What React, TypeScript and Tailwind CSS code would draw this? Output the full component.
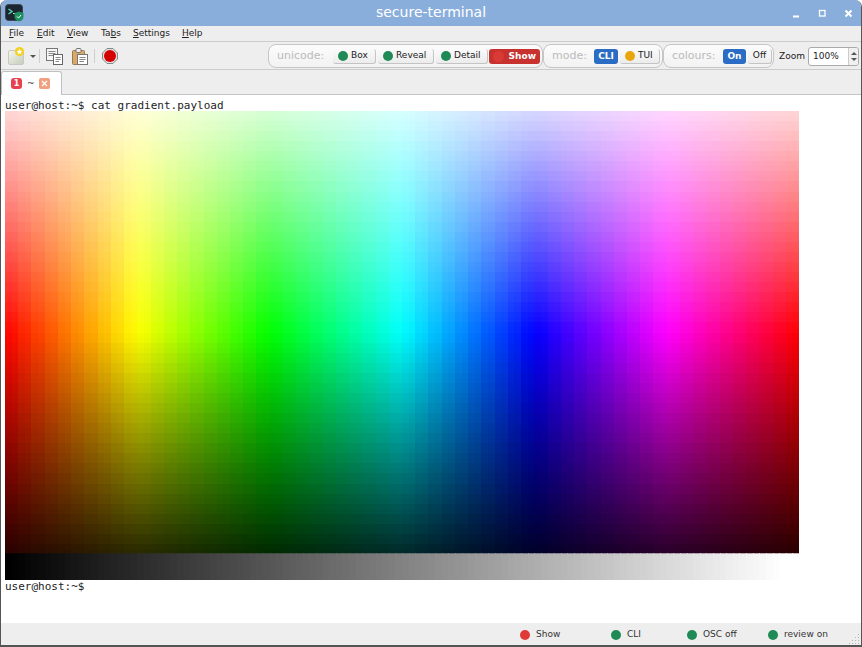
const ui = { fontFamily: '"DejaVu Sans", sans-serif' };
const COLS = 120;
const ROWS = 88;
const CELL_W = 794 / COLS;
const CELL_H = 443 / ROWS;

// faint blocks show through in the picture, so pull each fine cell a bit toward its coarse block
function soften(i: number, total: number) {
    const fine = (i + 0.5) / total;
    const coarse = (Math.floor(i / 2) * 2 + 1) / total;
    return fine + 0.5 * (coarse - fine);
}

function cellColor(col: number, row: number) {
    const hue = soften(col, COLS) * 360;
    const light = 92 - 84 * soften(row, ROWS);
    return `hsl(${hue} 100% ${light}%)`;
}

function grey(col: number) {
    const v = Math.round((col / (COLS - 3)) * 255);
    return `rgb(${v},${v},${v})`;
}

function GradientPayload() {
    const cols = Array.from({ length: COLS }, (_, i) => i);
    const rows = Array.from({ length: ROWS }, (_, i) => i);
    return (
        <svg width="794" height="469" viewBox="0 0 794 469" shapeRendering="crispEdges" className="block shrink-0">
            {rows.map((r) =>
                cols.map((c) => (
                    <rect key={`${r}-${c}`} x={c * CELL_W} y={r * CELL_H} width={CELL_W + 1} height={CELL_H + 1} fill={cellColor(c, r)} />
                ))
            )}
            {cols.map((c) => (
                <rect key={`seam-${c}`} x={c * CELL_W} y={442} width={CELL_W + 1} height={1} fill={grey(c)} opacity={0.7} />
            ))}
            {cols.map((c) => (
                <rect key={c} x={c * CELL_W} y={443} width={CELL_W + 1} height={26} fill={grey(c)} />
            ))}
        </svg>
    );
}

function AppIcon() {
    return (
        <svg width="19" height="18" viewBox="0 0 19 18" className="shrink-0">
            <rect x="0.5" y="0.5" width="17" height="16" rx="3" fill="#1c2630" stroke="#3b4650" />
            <path d="M3.5 5 L7 7.5 L3.5 10" fill="none" stroke="#4fd8b0" strokeWidth="1.4" />
            <path d="M8 9.5 H11" stroke="#d8e6e6" strokeWidth="1.2" />
            <path d="M14 7.5 L18.5 9 V12.5 Q18.5 16 14 17.5 Q9.5 16 9.5 12.5 V9 Z" fill="#1f9060" />
            <path d="M12 12.5 L13.5 14 L16 11" fill="none" stroke="#fff" strokeWidth="1" />
        </svg>
    );
}

function NewTabIcon() {
    return (
        <svg width="18" height="18" viewBox="0 0 18 18" className="shrink-0">
            <defs>
                <linearGradient id="pg" x1="0" y1="0" x2="1" y2="1">
                    <stop offset="0" stopColor="#f6f6f0" />
                    <stop offset="1" stopColor="#c4ccb8" />
                </linearGradient>
            </defs>
            <rect x="0.5" y="3.5" width="15" height="14" rx="1.5" fill="url(#pg)" stroke="#c8c8c0" />
            <circle cx="11.5" cy="4.5" r="4.5" fill="#f2d21e" />
            <path d="M11.5 1.8 L12.4 3.8 L14.4 4 L13 5.3 L13.4 7.2 L11.5 6.2 L9.6 7.2 L10 5.3 L8.6 4 L10.6 3.8 Z" fill="#fff" />
        </svg>
    );
}

function CopyIcon() {
    return (
        <svg width="17" height="17" viewBox="0 0 17 17" className="shrink-0">
            <rect x="0.5" y="0.5" width="11" height="12" fill="#f6f6f6" stroke="#777" />
            <path d="M2.5 3.5 H9.5 M2.5 5.5 H9.5 M2.5 7.5 H7" stroke="#888" />
            <rect x="7.5" y="6.5" width="9" height="10" fill="#fff" stroke="#666" />
            <path d="M9.5 9.5 H14.5 M9.5 11.5 H14.5 M9.5 13.5 H13" stroke="#888" />
        </svg>
    );
}

function PasteIcon() {
    return (
        <svg width="16" height="17" viewBox="0 0 16 17" className="shrink-0">
            <rect x="0.5" y="2.5" width="12" height="14" rx="1" fill="#d9a968" stroke="#9a7a50" />
            <rect x="4" y="0.5" width="5" height="4" rx="1" fill="#eee" stroke="#777" />
            <rect x="5.5" y="6.5" width="10" height="10" fill="#fff" stroke="#777" />
            <path d="M7.5 9.5 H13.5 M7.5 11.5 H13.5 M7.5 13.5 H12" stroke="#888" />
        </svg>
    );
}

function RecordIcon() {
    return (
        <svg width="16" height="16" viewBox="0 0 16 16" className="shrink-0">
            <path d="M5 0.5 H11 L15.5 5 V11 L11 15.5 H5 L0.5 11 V5 Z" fill="#ddd" stroke="#888" />
            <circle cx="8" cy="8" r="6" fill="#d40000" />
        </svg>
    );
}

function Dot({ color }: { color: string }) {
    return <span className="w-[10px] h-[10px] rounded-full shrink-0" style={{ backgroundColor: color }} />;
}

function SoftButton({ label, width, dot }: { label: string; width: string; dot?: string }) {
    return (
        <div className={`${width} h-[15px] rounded-[3px] border-b border-r border-[#c4c4c4] bg-gradient-to-b from-[#fafafa] to-[#ececec] flex items-center gap-[3px] text-[9px] text-[#222] ${dot ? "pl-[5px]" : "justify-center"}`}>
            {dot && <Dot color={dot} />}
            <span>{label}</span>
        </div>
    );
}

function BlueButton({ label, width }: { label: string; width: string }) {
    return (
        <div className={`${width} h-[15px] rounded-[3px] bg-[#2b6cc4] flex items-center justify-center text-[9px] font-bold text-white`}>
            {label}
        </div>
    );
}

function Group({ label, width, labelWidth, children }: { label: string; width: string; labelWidth: string; children: React.ReactNode }) {
    return (
        <div className={`${width} h-[24px] rounded-[8px] border border-[#c6c6c6] bg-gradient-to-b from-[#fcfcfc] to-[#f2f2f2] flex items-center pt-[1px] pl-[8px]`}>
            <span className={`${labelWidth} text-[11px] text-[#bbbbbb]`}>{label}</span>
            <div className="flex items-center gap-[2px]">{children}</div>
        </div>
    );
}

function MenuLabel({ before, mark, after, width }: { before?: string; mark: string; after: string; width: string }) {
    return (
        <span className={`${width} block`}>
            {before}
            <span className="underline underline-offset-1">{mark}</span>
            {after}
        </span>
    );
}

function StatusItem({ color, label, width }: { color: string; label: string; width: string }) {
    return (
        <div className={`${width} flex items-center gap-[6px]`}>
            <Dot color={color} />
            <span>{label}</span>
        </div>
    );
}

export default function App() {
    return (
        <div style={ui} className="w-[862px] h-[647px] bg-[#eeeeee] border-x border-b-2 border-[#555555] rounded-t-[7px] overflow-hidden flex flex-col relative">
            <div className="h-[26px] shrink-0 bg-[#8aaedb] relative flex items-center justify-center pb-[2px]">
                <div className="absolute left-[4px] top-[4px]">
                    <AppIcon />
                </div>
                <span className="text-[14px] text-white">secure-terminal</span>
                <div className="absolute right-[8px] top-[9px] flex items-center gap-[17px]">
                    <svg width="9" height="9" viewBox="0 0 9 9"><path d="M1 7.5 H7" stroke="#fff" strokeWidth="2" /></svg>
                    <svg width="9" height="9" viewBox="0 0 9 9"><rect x="1.5" y="1.5" width="5.5" height="5.5" fill="none" stroke="#fff" strokeWidth="1.3" /></svg>
                    <svg width="9" height="9" viewBox="0 0 9 9"><path d="M1.5 1.5 L7.5 7.5 M7.5 1.5 L1.5 7.5" stroke="#fff" strokeWidth="2" /></svg>
                </div>
            </div>

            <div className="h-[15px] shrink-0 flex items-center pl-[8px] text-[9px] text-[#222]">
                <MenuLabel mark="F" after="ile" width="w-[28px]" />
                <MenuLabel mark="E" after="dit" width="w-[30px]" />
                <MenuLabel mark="V" after="iew" width="w-[34px]" />
                <MenuLabel before="Ta" mark="b" after="s" width="w-[32px]" />
                <MenuLabel mark="S" after="ettings" width="w-[49px]" />
                <MenuLabel mark="H" after="elp" width="w-[30px]" />
            </div>

            <div className="h-[29px] shrink-0 border-y border-[#cccccc] flex items-center pt-[1px] pl-[7px] pr-[2px]">
                <NewTabIcon />
                <span className="ml-[4px] w-0 h-0 border-x-[3px] border-x-transparent border-t-[3px] border-t-[#555]" />
                <span className="ml-[3px] w-px h-[14px] bg-[#cfcfcf]" />
                <div className="ml-[6px]"><CopyIcon /></div>
                <div className="ml-[9px]"><PasteIcon /></div>
                <span className="ml-[6px] w-px h-[14px] bg-[#cfcfcf]" />
                <div className="ml-[7px]"><RecordIcon /></div>

                <div className="ml-auto flex items-center">
                    <Group label="unicode:" width="w-[275px]" labelWidth="w-[56px]">
                        <SoftButton label="Box" width="w-[43px]" dot="#1f8a55" />
                        <SoftButton label="Reveal" width="w-[56px]" dot="#1f8a55" />
                        <SoftButton label="Detail" width="w-[52px]" dot="#1f8a55" />
                        <div className="w-[51px] h-[15px] -ml-[1px] rounded-[3px] bg-[#c8322e] relative flex items-center justify-end pr-[4px] text-[9px] font-bold text-white">
                            <span className="absolute left-[4px] top-[2px] w-[11px] h-[11px] rounded-full bg-[#d93a35]" />
                            Show
                        </div>
                    </Group>
                    <Group label="mode:" width="w-[120px]" labelWidth="w-[42px]">
                        <BlueButton label="CLI" width="w-[24px]" />
                        <SoftButton label="TUI" width="w-[40px]" dot="#e8a60c" />
                    </Group>
                    <Group label="colours:" width="w-[111px]" labelWidth="w-[51px]">
                        <BlueButton label="On" width="w-[23px]" />
                        <SoftButton label="Off" width="w-[24px]" />
                    </Group>
                    <span className="ml-[5px] mt-[1px] w-[29px] text-[9px] text-[#222]">Zoom</span>
                    <div className="w-[51px] h-[19px] mt-[1px] rounded-[3px] border border-[#aaaaaa] bg-white flex items-center text-[9px] text-[#222]">
                        <span className="flex-1 pl-[4px]">100%</span>
                        <div className="w-[10px] h-full border-l border-[#cccccc] bg-[#f0f0f0] rounded-r-[3px] flex flex-col items-center justify-center gap-[3px]">
                            <span className="w-0 h-0 border-x-[3px] border-x-transparent border-b-[3px] border-b-[#555]" />
                            <span className="w-0 h-0 border-x-[3px] border-x-transparent border-t-[3px] border-t-[#555]" />
                        </div>
                    </div>
                </div>
            </div>

            <div className="h-[25px] shrink-0 border-b border-[#c4c4c4] flex items-end">
                <div className="w-[61px] h-[24px] -mb-px rounded-t-[3px] border border-b-0 border-[#c0c0c0] bg-white flex items-center pl-[9px] text-[9px] text-[#333] relative">
                    <span className="w-[11px] h-[11px] rounded-[3px] bg-[#e8404f] text-white text-[8px] font-bold flex items-center justify-center">1</span>
                    <span className="ml-[5px] w-[7px]">~</span>
                    <span className="ml-[5px] w-[11px] h-[11px] rounded-[2px] bg-[#f0a07c] text-white flex items-center justify-center">
                        <svg width="7" height="7" viewBox="0 0 7 7"><path d="M1 1 L6 6 M6 1 L1 6" stroke="#fff" strokeWidth="1.3" /></svg>
                    </span>
                </div>
            </div>

            <div style={{ fontFamily: '"DejaVu Sans Mono", monospace' }} className="flex-1 bg-white pl-[4px] pt-[3px] text-[11px] leading-[13px] text-[#222] flex flex-col">
                <div className="h-[13px] pt-[1px]">user@host:~$ cat gradient.payload</div>
                <GradientPayload />
                <div className="h-[13px]">user@host:~$</div>
            </div>

            <div className="h-[22px] shrink-0 flex items-center pt-[2px] pl-[519px] text-[9px] text-[#333] relative">
                <StatusItem color="#e03a36" label="Show" width="w-[91px]" />
                <StatusItem color="#1f8a55" label="CLI" width="w-[76px]" />
                <StatusItem color="#1f8a55" label="OSC off" width="w-[81px]" />
                <StatusItem color="#1f8a55" label="review on" width="w-[60px]" />
                <svg width="11" height="11" viewBox="0 0 11 11" className="absolute right-[1px] bottom-[1px]">
                    {[[9, 1], [6, 4], [9, 4], [3, 7], [6, 7], [9, 7], [0, 10], [3, 10], [6, 10], [9, 10]].map(([x, y]) => (
                        <rect key={`${x}-${y}`} x={x} y={y} width="1" height="1" fill="#b5b5b5" />
                    ))}
                </svg>
            </div>
        </div>
    );
}
